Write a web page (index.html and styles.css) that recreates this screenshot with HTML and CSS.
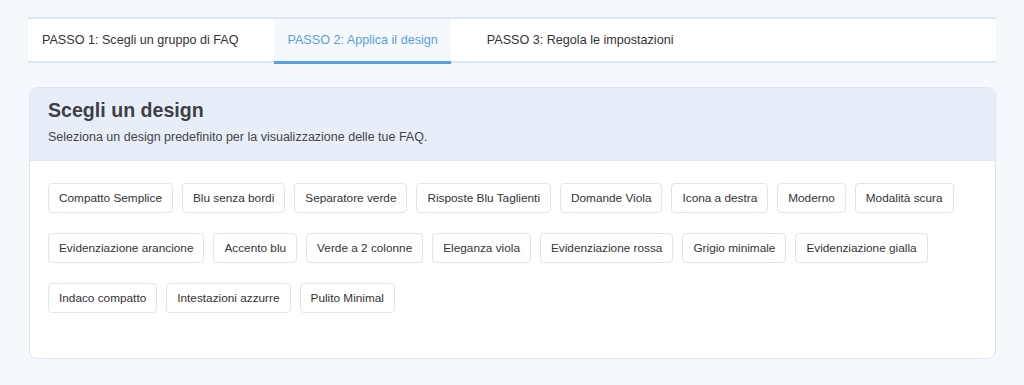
FILE: index.html
```html
<!DOCTYPE html>
<html lang="it">
<head>
  <meta charset="UTF-8">
  <title>Design FAQ</title>
  <link rel="stylesheet" href="styles.css">
</head>
<body>
  <nav class="steps">
    <button class="step">PASSO 1: Scegli un gruppo di FAQ</button>
    <button class="step active">PASSO 2: Applica il design</button>
    <button class="step">PASSO 3: Regola le impostazioni</button>
  </nav>

  <div class="card">
    <div class="card-head">
      <h2>Scegli un design</h2>
      <p>Seleziona un design predefinito per la visualizzazione delle tue FAQ.</p>
    </div>
    <div class="card-body">
      <div class="designs">
        <button>Compatto Semplice</button>
        <button>Blu senza bordi</button>
        <button>Separatore verde</button>
        <button>Risposte Blu Taglienti</button>
        <button>Domande Viola</button>
        <button>Icona a destra</button>
        <button>Moderno</button>
        <button>Modalità scura</button>
        <button>Evidenziazione arancione</button>
        <button>Accento blu</button>
        <button>Verde a 2 colonne</button>
        <button>Eleganza viola</button>
        <button>Evidenziazione rossa</button>
        <button>Grigio minimale</button>
        <button>Evidenziazione gialla</button>
        <button>Indaco compatto</button>
        <button>Intestazioni azzurre</button>
        <button>Pulito Minimal</button>
      </div>
    </div>
  </div>
</body>
</html>
```

FILE: styles.css
```css
:root {
  --bg-color: #f5f9fd;
  --text-color: #333;
  --primary: #5a9fe0;
  --border: #dde5ee;
  --head-bg: #e8eef8;
}

* {
  box-sizing: border-box;
}
body {
  margin: 0;
  padding: 17px 28px 20px;
  font-family: "Liberation Sans", Arial, sans-serif;
  background-color: var(--bg-color);
  color: var(--text-color);
}
.steps {
  display: flex;
  gap: 23px;
  background: #fff;
  border-top: 2px solid var(--border);
  border-bottom: 2px solid var(--border);
  padding: 0 0 0 1px;
}
.step {
  background: none;
  border: none;
  border-bottom: 3px solid transparent;
  margin-bottom: -3px;
  padding: 14px 13px 14px;
  font-family: inherit;
  font-size: 12.6px;
  color: #333;
  cursor: pointer;
}
.step.active {
  background: #f5f9fe;
  color: var(--primary);
  border-bottom-color: var(--primary);
}
.card {
  margin-top: 24px;
  margin-left: 1px;
  background: #fff;
  border: 1px solid var(--border);
  border-radius: 8px;
  overflow: hidden;
}
.card-head {
  background: var(--head-bg);
  border-bottom: 1px solid var(--border);
  padding: 11px 18px 16px;
}
.card-head h2 {
  margin: 0;
  font-size: 19.6px;
  color: #3c4047;
}
.card-head p {
  margin: 8px 0 0;
  font-size: 12.5px;
  color: #444;
}
.card-body {
  padding: 22px 18px 45px;
}
.designs {
  display: flex;
  flex-wrap: wrap;
  gap: 20px 9px;
}
.designs button {
  height: 30px;
  padding: 0 10px;
  background: #fff;
  border: 1px solid var(--border);
  border-radius: 4px;
  font-family: inherit;
  font-size: 11.8px;
  color: #333;
  cursor: pointer;
}
```
